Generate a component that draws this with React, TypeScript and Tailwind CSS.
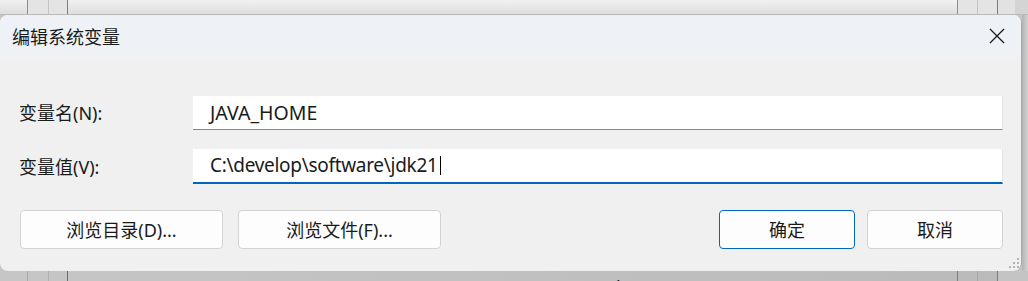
import React from "react";

const font = "font-['Noto_Sans','Noto_Sans_CJK_SC',sans-serif]";

function Grip() {
  const dot = "w-[2px] h-[2px] bg-[#b4b4b4]";
  const none = "w-[2px] h-[2px]";
  const rows = [
    [0, 0, 1],
    [0, 1, 1],
    [1, 1, 1],
  ];
  return (
    <div className="flex flex-col gap-[2px]">
      {rows.map((r, i) => (
        <div key={i} className="flex gap-[2px]">
          {r.map((v, j) => (
            <div key={j} className={v ? dot : none} />
          ))}
        </div>
      ))}
    </div>
  );
}

export default function App() {
  return (
    <div className={`w-[1028px] h-[281px] overflow-hidden flex flex-col bg-[#c6c6c6] ${font}`}>
      {/* background window top strip */}
      <div className="h-[15px] flex bg-gradient-to-b from-[#f1f1f1] to-[#dedede] border-b border-[#b9b9b9]">
        <div className="w-[27px]" />
        <div className="w-px bg-[#8c8c8c]" />
        <div className="w-[20px] bg-[#e4e4e4]" />
        <div className="w-px bg-[#c4c4c4]" />
        <div className="w-[18px] bg-[#e4e4e4]" />
        <div className="w-px bg-[#7c7c7c]" />
        <div className="w-[889px]" />
        <div className="w-px bg-[#8c8c8c]" />
        <div className="w-[19px] bg-[#e4e4e4]" />
        <div className="w-px bg-[#c4c4c4]" />
        <div className="w-[19px] bg-[#e4e4e4]" />
        <div className="w-px bg-[#7c7c7c]" />
        <div className="w-[17px] bg-[#e2e2e2]" />
        <div className="flex-1 bg-[#d4d4d4]" />
      </div>

      <div className="flex h-[256px]">
        {/* dialog */}
        <div className="w-[1022px] h-full rounded-[8px] overflow-hidden bg-[#f0f0f0] border-r border-[#a9a9a9] flex flex-col">
          <div className="h-[43px] shrink-0 bg-[#eef2f7] flex items-center justify-between pl-[12px] pr-[15px]">
            <span className="text-[18px] leading-none text-[#1a1a1a] mt-[1px]">编辑系统变量</span>
            <svg width="16" height="16" viewBox="0 0 16 16" className="mr-[1px] mb-[1px]">
              <path d="M1 1 L15 15 M15 1 L1 15" stroke="#1b1b1b" strokeWidth="1.3" fill="none" />
            </svg>
          </div>

          <div className="flex-1 flex flex-col pt-[38px] pl-[19px] pr-[18px]">
            <div className="flex items-center h-[34px]">
              <span className="w-[174px] text-[18px] text-[#1a1a1a] leading-none">变量名(N):</span>
              <div className="w-[810px] h-[34px] bg-white border-r border-[#e3e3e3] border-b border-b-[#868686] flex items-center pl-[17px]">
                <span className="text-[19.5px] text-[#1a1a1a] leading-none">JAVA_HOME</span>
              </div>
            </div>
            <div className="flex items-center h-[35px] mt-[19px]">
              <span className="w-[174px] text-[18px] text-[#1a1a1a] leading-none">变量值(V):</span>
              <div className="w-[810px] h-[35px] bg-white border-r border-[#e3e3e3] border-b-2 border-b-[#0067c0] flex items-center pl-[17px]">
                <span className="text-[19px] text-[#1a1a1a] leading-none tracking-[-0.3px]">C:\develop\software\jdk21</span>
                <div className="w-px h-[19px] bg-black ml-[2px]" />
              </div>
            </div>

            <div className="flex items-center mt-[26px] pl-px">
              <button className="w-[203px] h-[39px] rounded-[4px] border border-[#d3d3d3] bg-[#fdfdfd] text-[18px] text-[#1a1a1a] leading-none">
                浏览目录(D)...
              </button>
              <button className="w-[203px] h-[39px] ml-[15px] rounded-[4px] border border-[#d3d3d3] bg-[#fdfdfd] text-[18px] text-[#1a1a1a] leading-none">
                浏览文件(F)...
              </button>
              <div className="flex-1" />
              <button className="w-[136px] h-[39px] rounded-[4px] border border-[#0067c0] bg-[#fdfdfd] text-[18px] text-[#1a1a1a] leading-none">
                确定
              </button>
              <button className="w-[136px] h-[39px] ml-[12px] rounded-[4px] border border-[#d3d3d3] bg-[#fdfdfd] text-[18px] text-[#1a1a1a] leading-none">
                取消
              </button>
            </div>
            <div className="flex justify-end mt-[9px] mr-[-16px]">
              <Grip />
            </div>
          </div>
        </div>
        <div className="flex-1 bg-gradient-to-r from-[#b4b4b4] to-[#d2d2d2]" />
      </div>

      {/* background window bottom strip */}
      <div className="h-[10px] flex bg-gradient-to-r from-[#c6c6c6] to-[#bababa] overflow-hidden">
        <div className="w-[27px]" />
        <div className="w-px bg-[#a8a8a8]" />
        <div className="w-[20px]" />
        <div className="w-px bg-[#b0b0b0]" />
        <div className="w-[18px]" />
        <div className="w-px bg-[#6c6c6c]" />
        <div className="w-[889px] flex text-[18px] leading-none text-[#1a1a1a] pt-[7px] pl-[9px] whitespace-nowrap overflow-hidden">
          <span className="w-[268px]">TEMP   F</span>
          <span>%USERPROFILE%\AppData\Local\Temp  F</span>
        </div>
        <div className="w-px bg-[#7c7c7c]" />
        <div className="w-[19px]" />
        <div className="w-px bg-[#a8a8a8]" />
        <div className="w-[19px]" />
        <div className="w-px bg-[#7c7c7c]" />
        <div className="flex-1 bg-[#c4c4c4]" />
      </div>
    </div>
  );
}
